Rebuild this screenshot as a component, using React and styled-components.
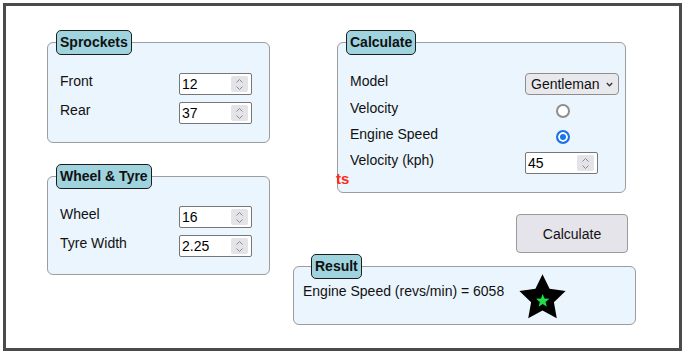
import React from "react";
import styled, { createGlobalStyle } from "styled-components";

const GlobalStyle = createGlobalStyle`
  html, body {
    margin: 0;
    padding: 0;
    background: #ffffff;
  }
  body {
    font-family: "Liberation Sans", Arial, sans-serif;
    font-size: 14px;
    color: #111111;
  }
`;

const Frame = styled.div`
  box-sizing: border-box;
  width: 679px;
  height: 348px;
  margin: 3px;
  border: 3px solid #4b4b4b;
  display: flex;
  align-items: flex-start;
  gap: 23px;
  padding: 24px 0 0 41px;
`;

const Column = styled.div`
  position: relative;
  display: flex;
  flex-direction: column;
  width: ${(p) => p.$width}px;
`;

const Panel = styled.fieldset`
  box-sizing: border-box;
  min-width: 0;
  width: ${(p) => p.$width}px;
  margin: ${(p) => p.$margin || "0"};
  padding: ${(p) => p.$padding};
  border: 1px solid #9d9d9d;
  border-radius: 6px;
  background: #ebf5fd;
  align-self: ${(p) => p.$align || "auto"};
`;

const Legend = styled.legend`
  margin-left: ${(p) => p.$inset}px;
  padding: 3px;
  border: 1px solid #1d1d1d;
  border-radius: 5px;
  background: #9fd3de;
  font-weight: bold;
  font-size: 14px;
  line-height: 17px;
  color: #111111;
`;

const FieldGrid = styled.div`
  display: grid;
  grid-template-columns: ${(p) => p.$cols};
  grid-template-rows: ${(p) => p.$rows};
  row-gap: ${(p) => p.$gap}px;
`;

const Label = styled.span`
  align-self: start;
  line-height: 17px;
  white-space: nowrap;
`;

const NumberBox = styled.div`
  box-sizing: border-box;
  width: 73px;
  height: 22px;
  display: flex;
  align-items: stretch;
  border: 1px solid #777777;
  border-radius: 2px;
  background: #ffffff;
`;

const NumberInput = styled.input`
  flex: 1;
  min-width: 0;
  margin: 0;
  padding: 0 0 0 2px;
  border: none;
  outline: none;
  background: transparent;
  font: 14px "Liberation Sans", Arial, sans-serif;
  color: #000000;
  -moz-appearance: textfield;
  &::-webkit-inner-spin-button,
  &::-webkit-outer-spin-button {
    -webkit-appearance: none;
    margin: 0;
  }
`;

const Spinner = styled.span`
  width: 17px;
  margin: 2px 3px 2px 0;
  border-radius: 2px;
  background: #e3e3e8;
  display: flex;
  flex-direction: column;
  align-items: center;
  justify-content: center;
  gap: 3px;
`;

const SelectWrap = styled.div`
  position: relative;
  width: 94px;
  height: 22px;
`;

const Select = styled.select`
  appearance: none;
  box-sizing: border-box;
  width: 100%;
  height: 100%;
  margin: 0;
  padding: 0 0 0 5px;
  border: 1px solid #8e8e8e;
  border-radius: 4px;
  background: #e9e9ed;
  font: 14px "Liberation Sans", Arial, sans-serif;
  color: #111111;
`;

const SelectArrow = styled.svg`
  position: absolute;
  right: 6px;
  top: 9px;
  pointer-events: none;
`;

const Radio = styled.input`
  appearance: none;
  box-sizing: border-box;
  margin: 0;
  width: 14px;
  height: 14px;
  border-radius: 50%;
  border: 2px solid #8e8e8e;
  background: #ffffff;
  justify-self: center;
  align-self: center;
  &:checked {
    border-color: #1a73e8;
    background: #1a73e8;
    box-shadow: inset 0 0 0 2px #ffffff;
  }
`;

const CalcButton = styled.button`
  align-self: flex-end;
  width: 112px;
  height: 39px;
  margin: 21px 8px 1px 0;
  padding: 0;
  border: 1px solid #9a9a9a;
  border-radius: 4px;
  background: #e5e4ea;
  font: 14px "Liberation Sans", Arial, sans-serif;
  color: #111111;
`;

const ResultRow = styled.div`
  display: flex;
  align-items: flex-start;
`;

const ResultText = styled.span`
  line-height: 17px;
  white-space: nowrap;
`;

const Star = styled.svg`
  margin: -9px 0 0 15px;
  flex: none;
`;

const Stray = styled.span`
  position: absolute;
  left: 43px;
  top: 140px;
  color: #ff2a1a;
  font-weight: bold;
  font-size: 15px;
  line-height: 17px;
`;

function Chevron({ up }) {
  return (
    <svg width="7" height="4" viewBox="0 0 7 4">
      <polyline
        points={up ? "0.5,3.5 3.5,0.5 6.5,3.5" : "0.5,0.5 3.5,3.5 6.5,0.5"}
        fill="none"
        stroke="#8c8c8c"
        strokeWidth="1"
      />
    </svg>
  );
}

function NumberField({ value }) {
  return (
    <NumberBox>
      <NumberInput type="number" defaultValue={value} />
      <Spinner>
        <Chevron up />
        <Chevron />
      </Spinner>
    </NumberBox>
  );
}

function starPoints(cx, cy, R, r) {
  const pts = [];
  for (let i = 0; i < 10; i++) {
    const rad = i % 2 === 0 ? R : r;
    const a = ((-90 + i * 36) * Math.PI) / 180;
    pts.push(`${(cx + rad * Math.cos(a)).toFixed(2)},${(cy + rad * Math.sin(a)).toFixed(2)}`);
  }
  return pts.join(" ");
}

export default function App() {
  return (
    <>
      <GlobalStyle />
      <Frame>
        <Column $width={223}>
          <Panel $width={223} $padding="18px 17px 18px 12px">
            <Legend $inset={-4}>Sprockets</Legend>
            <FieldGrid $cols="119px 73px" $rows="22px 22px" $gap={7}>
              <Label>Front</Label>
              <NumberField value="12" />
              <Label>Rear</Label>
              <NumberField value="37" />
            </FieldGrid>
          </Panel>
          <Panel $width={223} $margin="21px 0 0" $padding="17px 17px 17px 12px">
            <Legend $inset={-4}>Wheel &amp; Tyre</Legend>
            <FieldGrid $cols="119px 73px" $rows="22px 22px" $gap={7}>
              <Label>Wheel</Label>
              <NumberField value="16" />
              <Label>Tyre Width</Label>
              <NumberField value="2.25" />
            </FieldGrid>
          </Panel>
        </Column>

        <Column $width={343}>
          <Panel $width={289} $margin="0 0 0 44px" $padding="18px 25px 18px 12px">
            <Legend $inset={-4}>Calculate</Legend>
            <FieldGrid $cols="175px 75px" $rows="22px 21px 21px 22px" $gap={5}>
              <Label>Model</Label>
              <SelectWrap>
                <Select defaultValue="Gentleman">
                  <option>Gentleman</option>
                  <option>Lady</option>
                </Select>
                <SelectArrow width="7" height="5" viewBox="0 0 7 5">
                  <polyline points="0.8,1 3.5,3.8 6.2,1" fill="none" stroke="#333" strokeWidth="1.3" />
                </SelectArrow>
              </SelectWrap>
              <Label>Velocity</Label>
              <Radio type="radio" name="mode" />
              <Label>Engine Speed</Label>
              <Radio type="radio" name="mode" defaultChecked />
              <Label>Velocity (kph)</Label>
              <NumberField value="45" />
            </FieldGrid>
          </Panel>
          <Stray>ts</Stray>
          <CalcButton>Calculate</CalcButton>
          <Panel $width={343} $padding="4px 0 5px 9px">
            <Legend $inset={8}>Result</Legend>
            <ResultRow>
              <ResultText>Engine Speed (revs/min) = 6058</ResultText>
              <Star width="47" height="45" viewBox="0 0 47 45">
                <polygon points={starPoints(23.5, 24.5, 24.3, 12)} fill="#000" />
                <polygon points={starPoints(23.7, 27, 7, 3)} fill="#1fe04a" />
              </Star>
            </ResultRow>
          </Panel>
        </Column>
      </Frame>
    </>
  );
}
